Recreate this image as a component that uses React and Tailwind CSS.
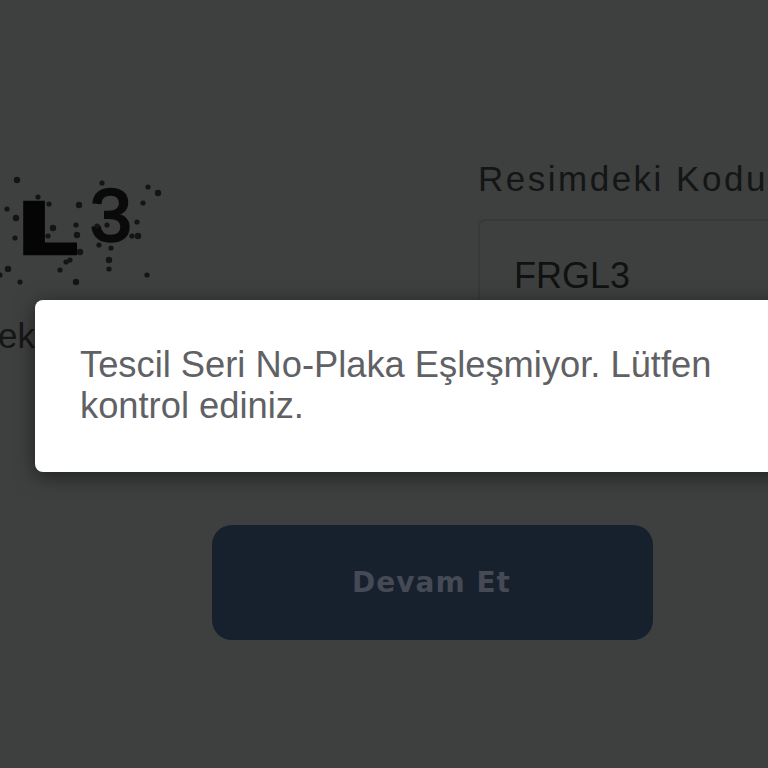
import React from "react";

const dots = [
  [17, 180], [102, 183], [148, 187], [158, 193], [38, 197], [49, 204], [79, 205], [143, 203], [7, 209], [16, 218],
  [137, 222], [76, 225], [53, 228], [97, 226], [107, 225], [77, 235], [48, 236], [132, 236], [138, 236], [99, 245],
  [111, 248], [80, 252], [70, 260], [66, 262], [109, 260], [60, 270], [109, 269], [76, 282], [20, 282], [0, 275],
  [8, 269], [147, 275], [15, 238],
];

function Captcha() {
  return (
    <svg width="170" height="130" viewBox="0 165 170 130" className="block blur-[0.6px]">
      <text x="-47" y="246" fontFamily="'DejaVu Sans', sans-serif" fontWeight="700" fontSize="62" fill="#050505">G</text>
      <text x="16" y="254" fontFamily="'DejaVu Sans', sans-serif" fontWeight="700" fontSize="71" fill="#050505" stroke="#050505" strokeWidth="2.5" textLength="62" lengthAdjust="spacingAndGlyphs">L</text>
      <text x="90" y="241" fontFamily="'Liberation Sans', sans-serif" fontSize="75" fill="#0a0a0a" stroke="#0a0a0a" strokeWidth="2.5">3</text>
      {dots.map(([x, y], i) => (
        <circle key={i} cx={x} cy={y} r={i % 3 === 0 ? 3.2 : 2.6} fill="#141414" />
      ))}
    </svg>
  );
}

export default function App() {
  return (
    <div className="relative h-[768px] w-[768px] overflow-hidden bg-[#3e3f3f] font-['Liberation_Sans',Arial,sans-serif]">
      <div className="flex h-[525px] pt-[159px]">
        <div className="w-[478px] shrink-0 pt-[6px]">
          <Captcha />
          <div className="-ml-[2px] mt-[21px] text-[35px] leading-[40px] text-[#161616]">ek</div>
        </div>
        <div className="w-[400px] shrink-0">
          <div className="text-[35px] leading-[40px] tracking-[2.5px] text-[#141515]">Resimdeki Kodu</div>
          <div className="mt-[20px] flex h-[115px] items-start rounded-l-lg border-t-2 border-l-2 border-[#383939] pl-[34px] pt-[34px] text-[36px] leading-[42px] text-[#111111]">
            FRGL3
          </div>
        </div>
      </div>
      <button className="ml-[212px] flex h-[115px] w-[441px] items-center justify-center rounded-[20px] bg-[#17212e] pr-[2px] font-['DejaVu_Sans',sans-serif] text-[28px] font-bold tracking-[1px] text-[#454a55]">
        Devam Et
      </button>
      <div className="absolute left-[35px] top-[300px] h-[172px] w-[800px] rounded-lg bg-white pl-[45px] pt-[44px] shadow-[0_4px_20px_rgba(0,0,0,0.5)]">
        <p className="w-[650px] text-[36.3px] leading-[41px] text-[#5f6165]">
          Tescil Seri No-Plaka Eşleşmiyor. Lütfen kontrol ediniz.
        </p>
      </div>
    </div>
  );
}
